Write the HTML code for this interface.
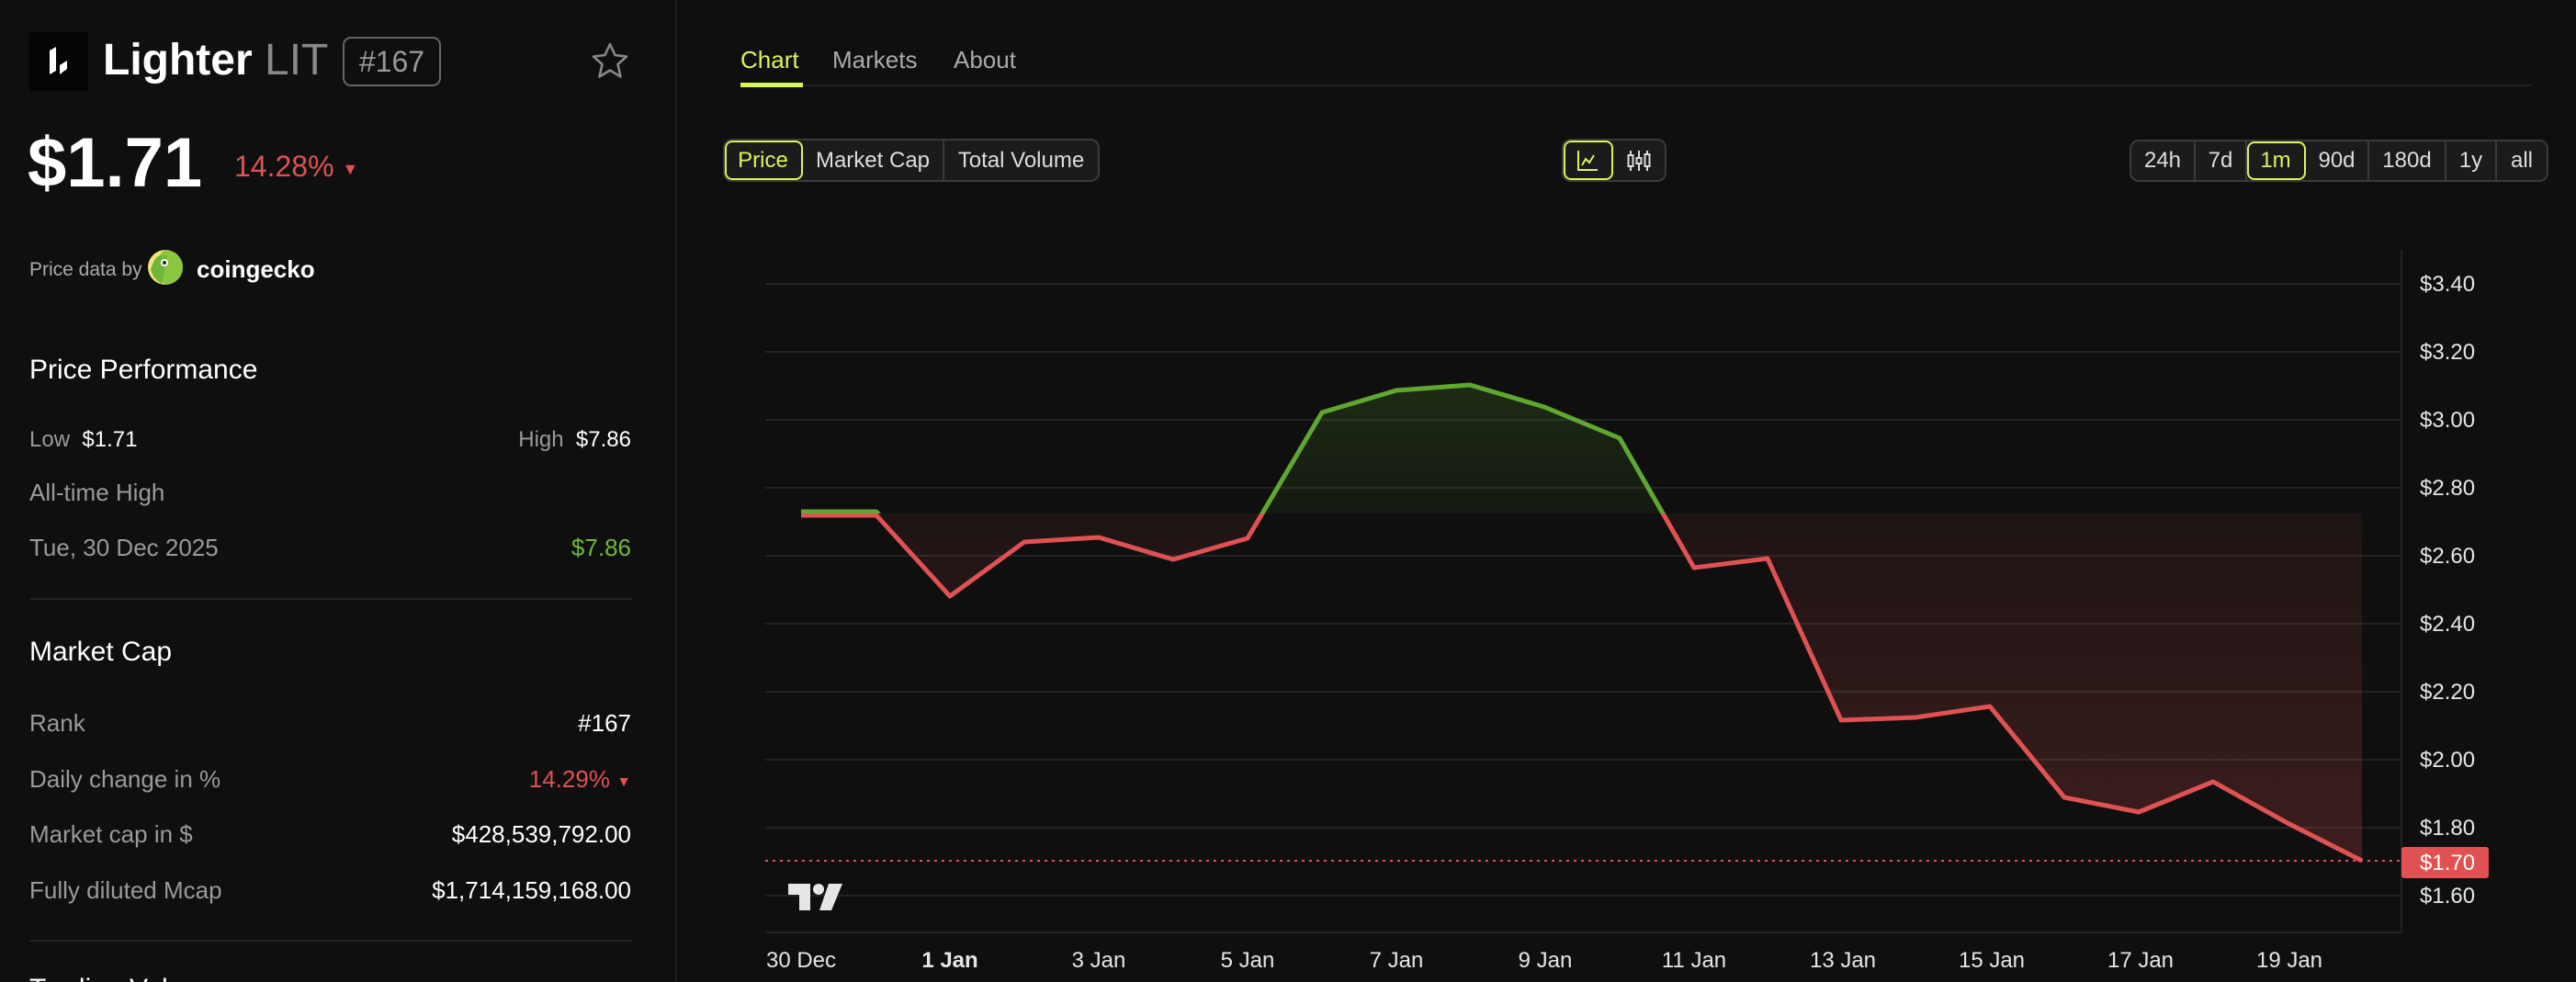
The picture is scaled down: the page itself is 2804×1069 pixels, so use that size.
<!DOCTYPE html>
<html><head><meta charset="utf-8"><style>
*{margin:0;padding:0;box-sizing:border-box}
html,body{width:2804px;height:1069px;overflow:hidden;background:#0f0f0f}
body{font-family:"Liberation Sans",Arial,sans-serif;color:#fff}
#w{position:relative;width:2804px;height:1069px;overflow:hidden}
.a{position:absolute;white-space:nowrap}
.g{color:#9a9a9a}
.r{text-align:right}
.seg{position:absolute;display:flex;border:2px solid #3a3a3a;border-radius:10px;background:#1b1b1b;overflow:hidden}
.seg div{display:flex;align-items:center;justify-content:center;font-size:24px;color:#ddd;border-right:2px solid #3a3a3a}
.seg div:last-child{border-right:none}
.seg .on{color:#d8f55a;outline:2px solid #d8f55a;outline-offset:-2px;border-radius:8px}
</style></head><body><div id="w">
<div class="a" style="left:735px;top:0;width:2px;height:1069px;background:#1d1d1d"></div>

<div class="a" style="left:32px;top:35px;width:64px;height:64px;background:#050505">
<svg width="64" height="64" viewBox="0 0 64 64"><path d="M22 20 L29 16 L29 42 L22 46 Z" fill="#fff"/><path d="M33 36 L41 31 L41 40 L33 46 Z" fill="#fff"/></svg></div>
<div class="a" style="left:112px;top:36px;line-height:60px;font-size:48px;font-weight:bold">Lighter <span style="font-weight:normal;color:#888">LIT</span></div>
<div class="a" style="left:373px;top:40px;width:107px;height:54px;border:2px solid #666;border-radius:9px;font-size:32px;color:#999;text-align:center;line-height:50px">#167</div>
<svg class="a" style="left:642px;top:45px" width="44" height="42" viewBox="0 0 44 42"><path d="M22 3 L27.5 15 L40 16.5 L30.5 25 L33.5 38.5 L22 31.5 L10.5 38.5 L13.5 25 L4 16.5 L16.5 15 Z" fill="none" stroke="#888" stroke-width="2.6" stroke-linejoin="round"/></svg>

<div class="a" style="left:30px;top:130px;font-size:76px;font-weight:bold;line-height:96px">$1.71</div>
<div class="a" style="left:255px;top:161px;font-size:32px;line-height:40px;color:#e05252">14.28% <span style="font-size:18px;vertical-align:2px">▼</span></div>

<div class="a g" style="left:32px;top:281px;font-size:21px;line-height:26px;color:#aaa">Price data by</div>
<svg class="a" style="left:160px;top:271px" width="40" height="40" viewBox="0 0 40 40"><circle cx="20" cy="20" r="19" fill="#f4e27a"/><path d="M20 1 A19 19 0 0 1 20 39 A14 19 0 0 1 11 20 A12 19 0 0 1 20 1Z" fill="#8dc63f"/><path d="M8 12 Q14 4 22 8 Q20 20 16 38 Q6 32 4 22 Z" fill="#6fb63a"/><circle cx="19" cy="15" r="4" fill="#fff"/><circle cx="19" cy="15" r="2" fill="#222"/></svg>
<div class="a" style="left:214px;top:277px;font-size:26px;font-weight:bold;line-height:32px">coingecko</div>

<div class="a" style="left:32px;top:384px;font-size:30px;line-height:38px">Price Performance</div>
<div class="a" style="left:32px;top:465px;font-size:24px;line-height:28px"><span class="g">Low</span>&nbsp; $1.71</div>
<div class="a r" style="right:2117px;top:465px;font-size:24px;line-height:28px"><span class="g">High</span>&nbsp; $7.86</div>
<div class="a g" style="left:32px;top:520px;font-size:26px;line-height:32px">All-time High</div>
<div class="a g" style="left:32px;top:580px;font-size:26px;line-height:32px">Tue, 30 Dec 2025</div>
<div class="a r" style="right:2117px;top:580px;font-size:26px;line-height:32px;color:#6fb83a">$7.86</div>
<div class="a" style="left:32px;top:651px;width:655px;height:2px;background:#222"></div>

<div class="a" style="left:32px;top:691px;font-size:30px;line-height:38px">Market Cap</div>
<div class="a g" style="left:32px;top:771px;font-size:26px;line-height:32px">Rank</div>
<div class="a r" style="right:2117px;top:771px;font-size:26px;line-height:32px">#167</div>
<div class="a g" style="left:32px;top:832px;font-size:26px;line-height:32px">Daily change in %</div>
<div class="a r" style="right:2117px;top:832px;font-size:26px;line-height:32px;color:#e05252">14.29% <span style="font-size:16px;vertical-align:1px">▼</span></div>
<div class="a g" style="left:32px;top:892px;font-size:26px;line-height:32px">Market cap in $</div>
<div class="a r" style="right:2117px;top:892px;font-size:26px;line-height:32px">$428,539,792.00</div>
<div class="a g" style="left:32px;top:953px;font-size:26px;line-height:32px">Fully diluted Mcap</div>
<div class="a r" style="right:2117px;top:953px;font-size:26px;line-height:32px">$1,714,159,168.00</div>
<div class="a" style="left:32px;top:1023px;width:655px;height:2px;background:#222"></div>
<div class="a" style="left:32px;top:1058px;font-size:30px;line-height:38px">Trading Volume</div>

<div class="a" style="left:806px;top:49px;font-size:26px;line-height:32px;color:#d8f55a">Chart</div>
<div class="a" style="left:906px;top:49px;font-size:26px;line-height:32px;color:#aaa">Markets</div>
<div class="a" style="left:1038px;top:49px;font-size:26px;line-height:32px;color:#aaa">About</div>
<div class="a" style="left:806px;top:92px;width:1950px;height:2px;background:#1f1f1f"></div>
<div class="a" style="left:806px;top:90px;width:68px;height:5px;background:#d8f55a"></div>

<div class="seg" style="left:787px;top:151px;height:47px">
<div class="on" style="width:85px">Price</div><div style="width:154px">Market Cap</div><div style="width:167px">Total Volume</div></div>
<div class="seg" style="left:1700px;top:151px;height:47px">
<div class="on" style="width:54px"><svg width="26" height="26" viewBox="0 0 26 26"><path d="M3 2 V23 H24" fill="none" stroke="#d8f55a" stroke-width="2"/><path d="M7 18 L11 11 L15 15 L20 7" fill="none" stroke="#d8f55a" stroke-width="2"/></svg></div>
<div style="width:56px"><svg width="28" height="26" viewBox="0 0 28 26"><g fill="none" stroke="#ddd" stroke-width="2"><path d="M5 2V24M14 2V24M23 2V24"/><rect x="2.5" y="7" width="5" height="12" fill="#1b1b1b"/><rect x="11.5" y="10" width="5" height="6" fill="#1b1b1b"/><rect x="20.5" y="6" width="5" height="13" fill="#1b1b1b"/></g></svg></div></div>

<div class="seg" style="left:2318px;top:152px;height:46px">
<div style="width:70px">24h</div><div style="width:56px">7d</div><div class="on" style="width:64px">1m</div><div style="width:69px">90d</div><div style="width:84px">180d</div><div style="width:55px">1y</div><div style="width:54px">all</div></div>

<svg class="a" style="left:0;top:0" width="2804" height="1069" viewBox="0 0 2804 1069">
<defs>
<linearGradient id="gg" x1="0" y1="419" x2="0" y2="559" gradientUnits="userSpaceOnUse"><stop offset="0" stop-color="#5fa830" stop-opacity="0.18"/><stop offset="1" stop-color="#5fa830" stop-opacity="0.07"/></linearGradient>
<linearGradient id="rg" x1="0" y1="559" x2="0" y2="937" gradientUnits="userSpaceOnUse"><stop offset="0" stop-color="#e05252" stop-opacity="0.07"/><stop offset="1" stop-color="#e05252" stop-opacity="0.22"/></linearGradient>
<clipPath id="top"><rect x="0" y="0" width="2804" height="559"/></clipPath>
<clipPath id="bot"><rect x="0" y="559" width="2804" height="600"/></clipPath>
</defs>
<g stroke="#232323" stroke-width="2">
<line x1="833" y1="309" x2="2614" y2="309"/><line x1="833" y1="383" x2="2614" y2="383"/><line x1="833" y1="457" x2="2614" y2="457"/><line x1="833" y1="531" x2="2614" y2="531"/><line x1="833" y1="605" x2="2614" y2="605"/><line x1="833" y1="679" x2="2614" y2="679"/><line x1="833" y1="753" x2="2614" y2="753"/><line x1="833" y1="827" x2="2614" y2="827"/><line x1="833" y1="901" x2="2614" y2="901"/><line x1="833" y1="975" x2="2614" y2="975"/>
<line x1="833" y1="1015" x2="2614" y2="1015"/><line x1="2614" y1="272" x2="2614" y2="1015"/>
</g>
<polygon clip-path="url(#top)" fill="url(#gg)" points="872,559 954,559 1034,649 1115,590 1196,585 1277,609 1358,586 1439,449 1520,425 1600,419 1681,443 1763,477 1844,618 1924,608 2004,784 2085,781 2166,769 2247,868 2328,884 2409,851 2490,896 2571,937 2571,559"/>
<polygon clip-path="url(#bot)" fill="url(#rg)" points="872,559 954,559 1034,649 1115,590 1196,585 1277,609 1358,586 1439,449 1520,425 1600,419 1681,443 1763,477 1844,618 1924,608 2004,784 2085,781 2166,769 2247,868 2328,884 2409,851 2490,896 2571,937 2571,559"/>
<line x1="833" y1="937" x2="2614" y2="937" stroke="#e05252" stroke-width="2" stroke-dasharray="3,5"/>
<polyline clip-path="url(#bot)" fill="none" stroke="#e05252" stroke-width="5" stroke-linejoin="round" points="872,561 954,561 1034,649 1115,590 1196,585 1277,609 1358,586 1439,449 1520,425 1600,419 1681,443 1763,477 1844,618 1924,608 2004,784 2085,781 2166,769 2247,868 2328,884 2409,851 2490,896 2571,937"/>
<polyline clip-path="url(#top)" fill="none" stroke="#5fa830" stroke-width="5" stroke-linejoin="round" points="872,557 954,557 1034,649 1115,590 1196,585 1277,609 1358,586 1439,449 1520,425 1600,419 1681,443 1763,477 1844,618"/>
<g fill="#e6e6e6" font-family="Liberation Sans, Arial, sans-serif" font-size="24">
<text x="2634" y="317">$3.40</text><text x="2634" y="391">$3.20</text><text x="2634" y="465">$3.00</text><text x="2634" y="539">$2.80</text><text x="2634" y="613">$2.60</text><text x="2634" y="687">$2.40</text><text x="2634" y="761">$2.20</text><text x="2634" y="835">$2.00</text><text x="2634" y="909">$1.80</text><text x="2634" y="983">$1.60</text>
</g>
<rect x="2614" y="922" width="95" height="34" rx="3" fill="#e05252"/>
<text x="2634" y="947" fill="#fff" font-family="Liberation Sans, Arial, sans-serif" font-size="24">$1.70</text>
<g fill="#e6e6e6" font-family="Liberation Sans, Arial, sans-serif" font-size="24" text-anchor="middle">
<text x="872" y="1053">30 Dec</text><text x="1034" y="1053" font-weight="bold">1 Jan</text><text x="1196" y="1053">3 Jan</text><text x="1358" y="1053">5 Jan</text><text x="1520" y="1053">7 Jan</text><text x="1682" y="1053">9 Jan</text><text x="1844" y="1053">11 Jan</text><text x="2006" y="1053">13 Jan</text><text x="2168" y="1053">15 Jan</text><text x="2330" y="1053">17 Jan</text><text x="2492" y="1053">19 Jan</text>
</g>
<g fill="#e6e6e6"><path d="M858 962 H882 V991 H870 V974 H858 Z"/><circle cx="891" cy="968" r="6"/><path d="M902 962 H917 L905 991 H892 Z"/></g>
</svg>
</div></body></html>
